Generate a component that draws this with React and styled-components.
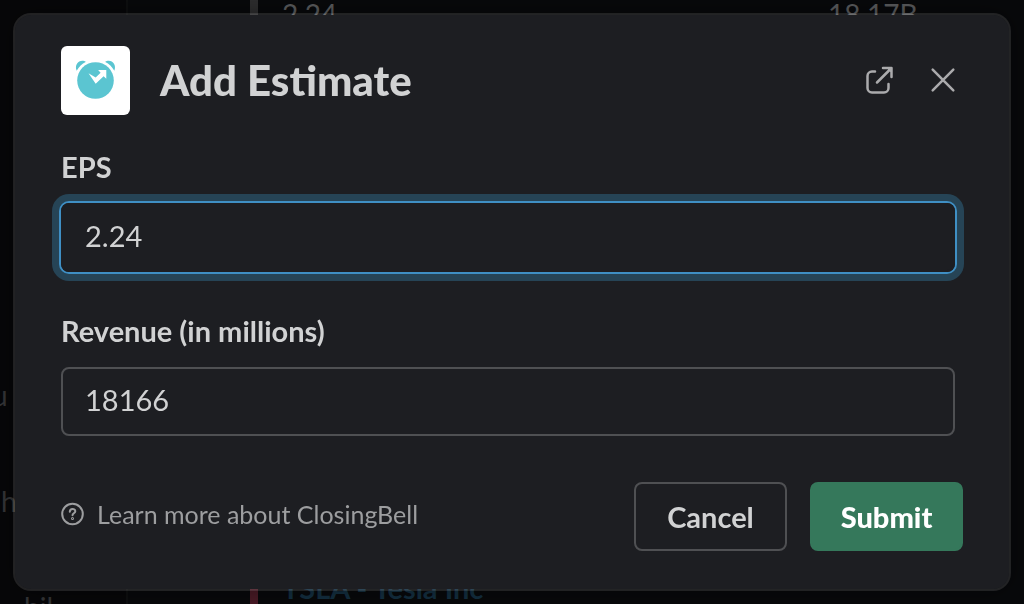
import React from "react";
import styled, { createGlobalStyle } from "styled-components";

const GlobalStyle = createGlobalStyle`
  * { box-sizing: border-box; }
  body {
    margin: 0;
    background: #08090b;
    font-family: Lato, "Liberation Sans", sans-serif;
    color: #d1d2d3;
  }
`;

const Workspace = styled.div`
  display: grid;
  grid-template-columns: 128px 1fr;
  height: 100vh;
  overflow: hidden;
`;

const Sidebar = styled.aside`
  display: flex;
  flex-direction: column;
  gap: 70px;
  padding-top: 377px;
  height: 100vh;
  overflow: hidden;
  border-right: 2px solid #0e0f10;
  background: #070709;
  color: #353638;
  font-size: 28px;
  line-height: 36px;
`;

const SidebarLine = styled.span`
  flex: none;
  text-indent: ${(p) => p.$indent}px;
`;

const Feed = styled.main`
  display: flex;
  flex-direction: column;
  justify-content: space-between;
  padding-left: 122px;
  line-height: 28px;
`;

const Attachment = styled.div`
  display: grid;
  grid-template-columns: 546px 1fr;
  padding-left: 24px;
  height: 30px;
  border-left: 8px solid ${(p) => p.$bar};
  color: ${(p) => p.$ink};
  font-size: ${(p) => (p.$strong ? 29 : 28)}px;
  font-weight: ${(p) => (p.$strong ? 700 : 400)};
`;

const Overlay = styled.div`
  position: fixed;
  inset: 0;
  display: flex;
  align-items: flex-start;
  padding: 13px;
`;

const Dialog = styled.form`
  flex: 1;
  padding: 30px 46px 38px;
  border: 2px solid #ffffff1c;
  border-radius: 18px;
  background: #1d1e22 padding-box;
  box-shadow: 0 0 24px #0006;
`;

const Header = styled.header`
  display: flex;
  align-items: center;
  height: 70px;
  padding-right: 4px;
`;

const AppLogo = styled.svg`
  width: 69px;
  height: 69px;
  border-radius: 6px;
  background: #fff;
`;

const Title = styled.h1`
  flex: 1;
  margin: 0 0 0 30px;
  font-family: "Lato Black", Lato, "Liberation Sans", sans-serif;
  font-size: 42px;
  line-height: 52px;
  font-weight: 900;
`;

const IconButton = styled.button`
  display: flex;
  width: 32px;
  height: 32px;
  margin-left: 32px;
  padding: 0;
  border: 0;
  background: none;
  color: #ababad;
`;

const Field = styled.div`
  display: flex;
  flex-direction: column;
  padding-right: 8px;
  margin-top: ${(p) => p.$gap}px;
`;

const Label = styled.label`
  margin-bottom: 18px;
  font-size: 29px;
  line-height: 36px;
  font-weight: 700;
`;

const TextInput = styled.input`
  width: 100%;
  height: 69px;
  padding: 0 22px 4px;
  border: 2px solid #4f5053;
  border-radius: 8px;
  outline: none;
  background: transparent;
  color: #d1d2d3;
  font: 400 29px Lato, "Liberation Sans", sans-serif;
  ${(p) =>
    p.$active &&
    `
    border-color: #1d1e22;
    box-shadow: 0 0 0 2px #3f8fc4, 0 0 0 9px #264456;
  `}
`;

const Footer = styled.footer`
  display: flex;
  align-items: center;
  gap: 23px;
  margin-top: 46px;
`;

const HelpLink = styled.a`
  display: flex;
  align-items: center;
  gap: 12px;
  margin-right: auto;
  padding-bottom: 5px;
  color: #9d9ea0;
  font-size: 25px;
  line-height: 32px;
  text-decoration: none;
`;

const Button = styled.button`
  width: 153px;
  height: 69px;
  padding: 0;
  border: 2px solid ${(p) => (p.$primary ? "#35785b" : "#4f5053")};
  border-radius: 8px;
  background: ${(p) => (p.$primary ? "#35785b" : "transparent")};
  color: ${(p) => (p.$primary ? "#fff" : "#d1d2d3")};
  font: ${(p) => (p.$primary ? '900 29px "Lato Black", Lato' : "700 29px Lato")}, "Liberation Sans", sans-serif;
`;

function ClockLogo() {
  return (
    <AppLogo viewBox="0 0 69 69" role="img" aria-label="ClosingBell">
      <g fill="#5bc5d1">
        <circle cx="34.5" cy="34.5" r="18.3" />
        <path d="M15.7 24.8C13.2 19 17.5 14 22.3 14.8c1.3.2 2.2.8 2.4 1.100-3.700 1.800-6.800 4.900-9 8.900Z" />
        <path d="M53.300 24.800C55.800 19 51.500 14 46.700 14.800c-1.300.2-2.200.8-2.400 1.100 3.700 1.800 6.800 4.900 9 8.900Z" />
      </g>
      <path fill="#fff" d="M27.500 27.200l7.200 4.300 4.900-4.700-2.500-2.700H45.300v8.700l-2.700-2.600-7.900 7.500Z" />
    </AppLogo>
  );
}

function OpenIcon() {
  return (
    <svg width="32" height="32" viewBox="0 0 32 32" fill="none" stroke="currentColor" strokeWidth="2.500" strokeLinecap="round" strokeLinejoin="round" aria-hidden="true">
      <path d="M12 7.500H9A4.500 4.500 0 0 0 4.500 12v12A4.500 4.500 0 0 0 9 28.500h12a4.500 4.500 0 0 0 4.500-4.500v-4" />
      <path d="M14 18.500 28.500 4M20 4h8.500v9" />
      <path fill="currentColor" strokeWidth="1" d="M24.500 4h4v4Z" />
    </svg>
  );
}

function CloseIcon() {
  return (
    <svg width="32" height="32" viewBox="0 0 32 32" fill="none" stroke="currentColor" strokeWidth="2.500" strokeLinecap="round" aria-hidden="true">
      <path d="M5.700 5.700l20.600 20.600M26.300 5.700l-20.600 20.600" />
    </svg>
  );
}

function HelpIcon() {
  return (
    <svg width="24" height="24" viewBox="0 0 24 24" fill="none" stroke="currentColor" strokeWidth="2" strokeLinecap="round" aria-hidden="true">
      <circle cx="11.500" cy="12" r="10.300" />
      <path d="M8.800 9.700c.1-3.600 5.500-3.600 5.500-.5 0 2.100-2.800 2.100-2.800 4.100" />
      <circle cx="11.500" cy="16.600" r=".5" />
    </svg>
  );
}

export default function App() {
  return (
    <>
      <GlobalStyle />
      <Workspace>
        <Sidebar>
          <SidebarLine $indent={-8}>u</SidebarLine>
          <SidebarLine $indent={1}>h</SidebarLine>
          <SidebarLine $indent={24}>bil</SidebarLine>
        </Sidebar>
        <Feed>
          <Attachment $bar="#2e2e2f" $ink="#5a5b5d">
            <span>2.24</span>
            <span>18.17B</span>
          </Attachment>
          <Attachment $bar="#4a1b26" $ink="#142f40" $strong>
            <span>TSLA - Tesla Inc</span>
          </Attachment>
        </Feed>
      </Workspace>
      <Overlay>
        <Dialog role="dialog" aria-labelledby="dialog-title" onSubmit={(e) => e.preventDefault()}>
          <Header>
            <ClockLogo />
            <Title id="dialog-title">Add Estimate</Title>
            <IconButton type="button" aria-label="Open in new window"><OpenIcon /></IconButton>
            <IconButton type="button" aria-label="Close"><CloseIcon /></IconButton>
          </Header>
          <Field $gap={34}>
            <Label htmlFor="eps">EPS</Label>
            <TextInput id="eps" defaultValue="2.24" $active />
          </Field>
          <Field $gap={41}>
            <Label htmlFor="revenue">Revenue (in millions)</Label>
            <TextInput id="revenue" defaultValue="18166" />
          </Field>
          <Footer>
            <HelpLink href="#help"><HelpIcon />Learn more about ClosingBell</HelpLink>
            <Button type="button">Cancel</Button>
            <Button type="submit" $primary>Submit</Button>
          </Footer>
        </Dialog>
      </Overlay>
    </>
  );
}
